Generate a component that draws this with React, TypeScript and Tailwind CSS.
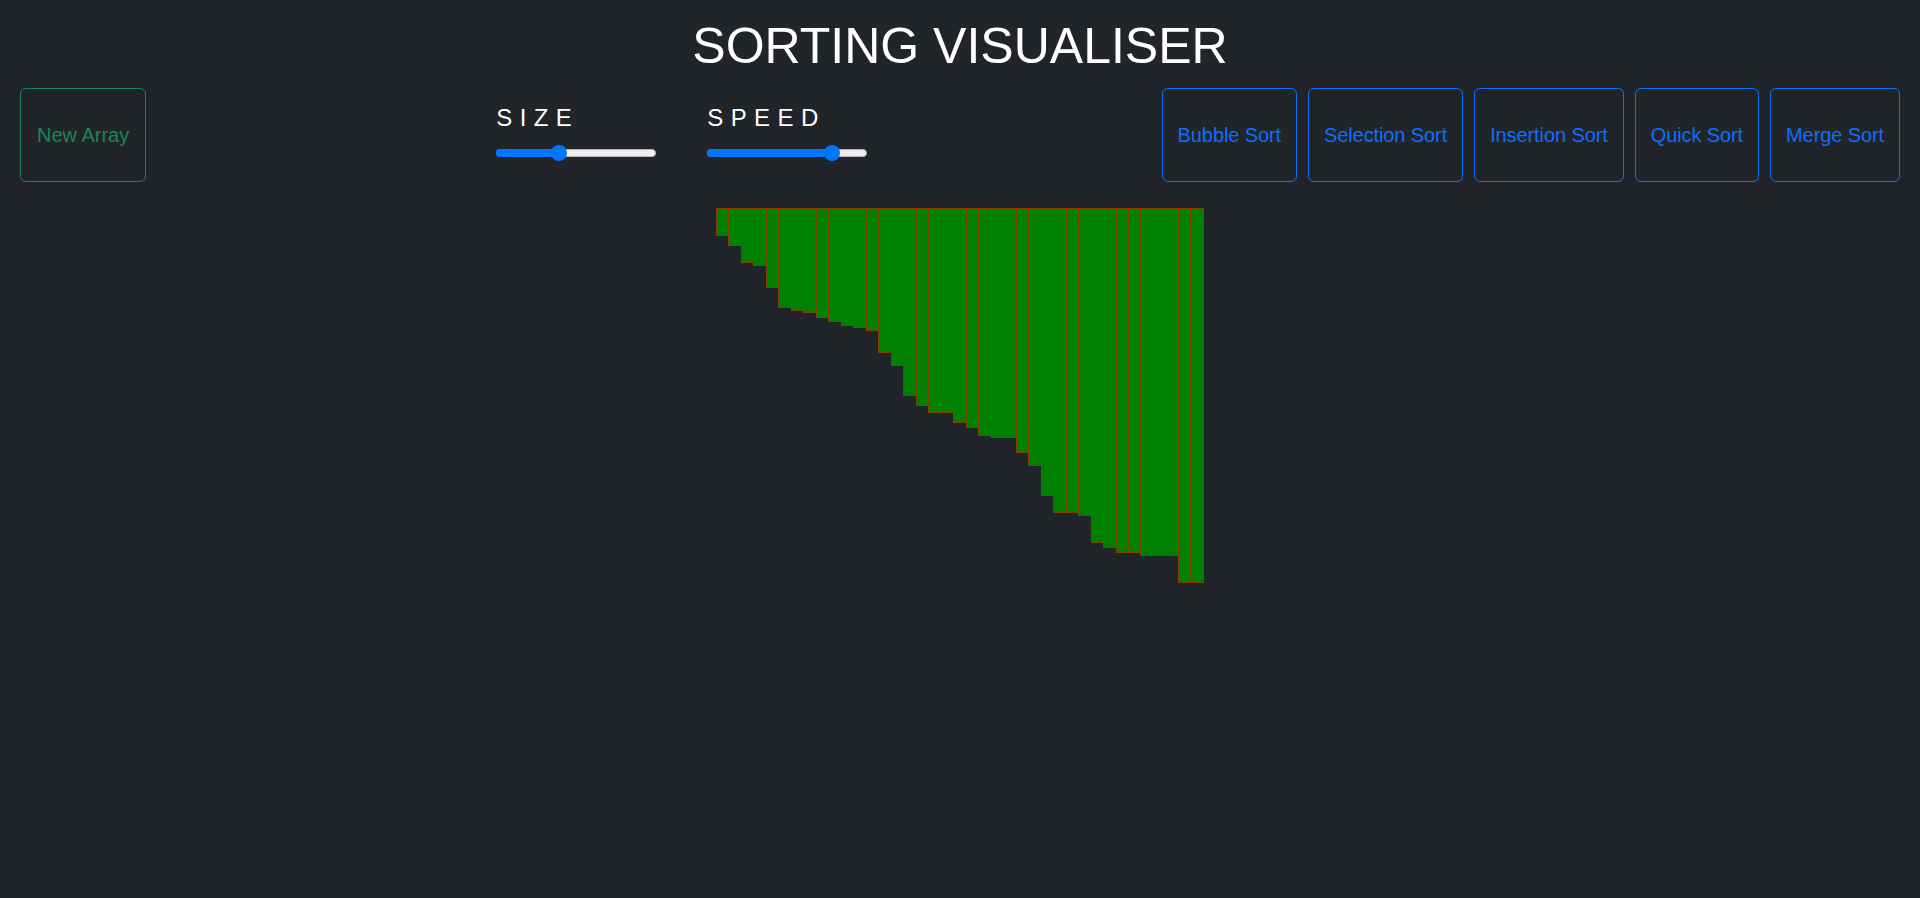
import React from "react";

const heights = [
  27.7, 37.7, 55.3, 57.7, 79.7, 100.3, 103, 105.3, 110.3, 113.7, 118, 120.3, 123,
  145.3, 158, 188, 198, 205.3, 205.3, 215.3, 219.7, 228, 229.7, 229.7, 244.7, 257.7,
  288, 304.7, 305.3, 308, 335.3, 339.7, 345.3, 345.3, 348, 348, 348, 375.3, 375.3,
];

function Slider({ label, value }: { label: string; value: number }) {
  return (
    <div className="flex flex-col w-[160px]">
      <div className="text-[24px] leading-[28px] tracking-[7.4px] text-white">{label}</div>
      <div className="relative mt-[13px] h-[16px] w-[160px]">
        <div className="absolute left-0 right-0 top-[4px] h-[8px] rounded-full bg-[#efefef] border border-[#b5b5b5]" />
        <div
          className="absolute left-0 top-[4px] h-[8px] rounded-full bg-[#0075ff]"
          style={{ width: `${8 + value * 144}px` }}
        />
        <div
          className="absolute top-0 h-[16px] w-[16px] rounded-full bg-[#0075ff]"
          style={{ left: `${value * 144}px` }}
        />
      </div>
    </div>
  );
}

const sorts = ["Bubble Sort", "Selection Sort", "Insertion Sort", "Quick Sort", "Merge Sort"];

export default function App() {
  return (
    <div
      className="min-h-[898px] w-full bg-[#212529] text-white"
      style={{ fontFamily: '"Liberation Sans", Arial, sans-serif' }}
    >
      <h1 className="pt-4 text-center text-[50px] leading-[60px] font-normal text-white">
        SORTING VISUALISER
      </h1>
      <div className="mt-3 flex items-start">
        <button className="ml-5 h-[94px] rounded-md border border-[#198754] px-4 text-[20px] text-[#198754]">
          New Array
        </button>
        <div className="ml-[350px] mt-[16px] flex gap-[51px]">
          <Slider label="SIZE" value={0.38} />
          <Slider label="SPEED" value={0.81} />
        </div>
        <div className="ml-auto mr-[20px] flex gap-[11px]">
          {sorts.map((s) => (
            <button
              key={s}
              className="h-[94px] rounded-md border border-[#0d6efd] px-[15px] text-[20px] tracking-[-0.1px] text-[#0d6efd]"
            >
              {s}
            </button>
          ))}
        </div>
      </div>
      <div className="mt-[26px] flex justify-center">
        <div className="flex w-[488px] items-start">
          {heights.map((h, i) => (
            <div
              key={i}
              className={`flex-1 bg-[#008000] border-l border-t border-b border-[#7f4000] ${
                i === heights.length - 1 ? "border-r" : ""
              }`}
              style={{ height: `${h}px` }}
            />
          ))}
        </div>
      </div>
    </div>
  );
}
